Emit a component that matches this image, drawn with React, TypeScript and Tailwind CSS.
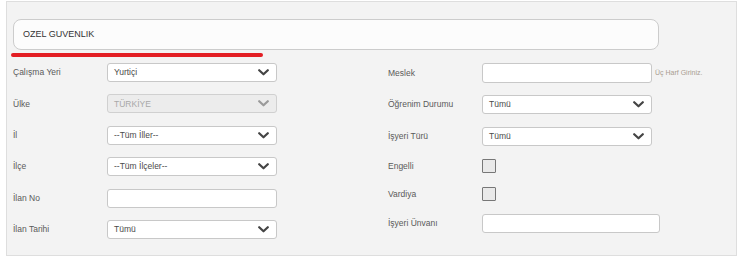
import React from "react";

const font = { fontFamily: '"Liberation Sans", Arial, sans-serif' };

function Chevron({ color = "#444" }: { color?: string }) {
  return (
    <svg width="11" height="7" viewBox="0 0 11 7" className="shrink-0">
      <path d="M1.2 1.2 L5.5 5.3 L9.8 1.2" fill="none" stroke={color} strokeWidth="2.2" strokeLinecap="round" strokeLinejoin="round" />
    </svg>
  );
}

function Select({ text, disabled = false }: { text: string; disabled?: boolean }) {
  return (
    <div
      className={`flex h-[19px] w-[170px] items-center justify-between rounded-[3px] border pl-[6px] pr-[7px] ${
        disabled ? "border-[#d0d0d0] bg-[#ececec] text-[#a8a8a8]" : "border-[#c8c8c8] bg-white text-[#4a4a4a]"
      }`}
    >
      <span className="text-[8.5px] leading-none">{text}</span>
      <Chevron color={disabled ? "#9a9a9a" : "#444"} />
    </div>
  );
}

function Input({ w = "w-[170px]", h = "h-[19px]" }: { w?: string; h?: string }) {
  return <div className={`${w} ${h} rounded-[3px] border border-[#c8c8c8] bg-white`} />;
}

function Check() {
  return <div className="h-[14px] w-[14px] rounded-[1px] border border-[#777] bg-[#e9e9e9]" />;
}

function Label({ children }: { children: React.ReactNode }) {
  return <span className="w-[94px] shrink-0 text-[8.5px] leading-none text-[#5a5a5a]">{children}</span>;
}

export default function App() {
  return (
    <div className="h-[261px] w-[738px] bg-white" style={font}>
      <div className="ml-[6px] pt-[1px]">
        <div className="h-[255px] w-[731px] border border-[#dedede] bg-[#f3f3f3] pl-[6px] pt-[17px]">
          <div className="flex h-[31px] w-[646px] items-center rounded-[8px] border border-[#cccccc] bg-[#fcfcfc] pl-[9px]">
            <span className="text-[9px] text-[#333]">OZEL GUVENLIK</span>
          </div>
          <div className="ml-[-2px] mt-[3px] h-[4px] w-[252px] rounded-full bg-[#e31e24]" />
          <div className="mt-[6px] flex">
            <div className="flex w-[375px] flex-col gap-[12.4px]">
              <div className="flex h-[19px] items-center">
                <Label>Çalışma Yeri</Label>
                <Select text="Yurtiçi" />
              </div>
              <div className="flex h-[19px] items-center">
                <Label>Ülke</Label>
                <Select text="TÜRKİYE" disabled />
              </div>
              <div className="flex h-[19px] items-center">
                <Label>İl</Label>
                <Select text="--Tüm İller--" />
              </div>
              <div className="flex h-[19px] items-center">
                <Label>İlçe</Label>
                <Select text="--Tüm İlçeler--" />
              </div>
              <div className="flex h-[19px] items-center">
                <Label>İlan No</Label>
                <Input />
              </div>
              <div className="flex h-[19px] items-center">
                <Label>İlan Tarihi</Label>
                <Select text="Tümü" />
              </div>
            </div>
            <div className="flex flex-col">
              <div className="flex h-[20px] items-center">
                <Label>Meslek</Label>
                <Input h="h-[20px]" />
                <span className="ml-[3px] text-[7px] text-[#a89c90]">Üç Harf Giriniz.</span>
              </div>
              <div className="mt-[12px] flex h-[18px] items-center">
                <Label>Öğrenim Durumu</Label>
                <Select text="Tümü" />
              </div>
              <div className="mt-[14px] flex h-[18px] items-center">
                <Label>İşyeri Türü</Label>
                <Select text="Tümü" />
              </div>
              <div className="mt-[14px] flex h-[14px] items-center">
                <Label>Engelli</Label>
                <Check />
              </div>
              <div className="mt-[14px] flex h-[14px] items-center">
                <Label>Vardiya</Label>
                <Check />
              </div>
              <div className="mt-[13px] flex h-[19px] items-center">
                <Label>İşyeri Ünvanı</Label>
                <Input w="w-[178px]" />
              </div>
            </div>
          </div>
        </div>
      </div>
    </div>
  );
}
